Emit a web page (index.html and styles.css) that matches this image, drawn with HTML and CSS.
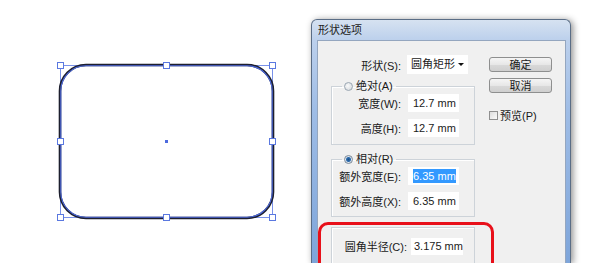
FILE: index.html
```html
<!DOCTYPE html>
<html lang="zh-CN">
<head>
    <meta charset="UTF-8">
    <title>形状选项</title>
    <link rel="stylesheet" href="styles.css">
</head>
<body>
    <div class="canvas">
        <svg width="300" height="263" viewBox="0 0 300 263">
            <rect x="60.5" y="65.5" width="212" height="152" fill="none" stroke="#7a92ea" stroke-width="1"/>
            <rect x="60" y="65" width="213" height="153" rx="26" fill="none" stroke="#1d1f2e" stroke-width="2.6"/>
            <rect x="60.8" y="65.8" width="211.4" height="151.4" rx="25" fill="none" stroke="#4d6ade" stroke-width="1.1"/>
            <g fill="#fff" stroke="#5a78e0" stroke-width="1">
                <rect x="57.5" y="62.5" width="6" height="6"/>
                <rect x="163.5" y="62.5" width="6" height="6"/>
                <rect x="269.5" y="62.5" width="6" height="6"/>
                <rect x="57.5" y="138.5" width="6" height="6"/>
                <rect x="269.5" y="138.5" width="6" height="6"/>
                <rect x="57.5" y="214.5" width="6" height="6"/>
                <rect x="163.5" y="214.5" width="6" height="6"/>
                <rect x="269.5" y="214.5" width="6" height="6"/>
            </g>
            <rect x="165" y="140" width="3" height="3" fill="#4d6ade"/>
        </svg>
    </div>

    <div class="dialog">
        <div class="titlebar">形状选项</div>
        <div class="client">
            <div class="form">
                <div class="row shape-row">
                    <span class="lbl">形状(S):</span>
                    <div class="select">圆角矩形<span class="caret"></span></div>
                </div>

                <fieldset class="group">
                    <legend><span class="radio"></span>绝对(A)</legend>
                    <div class="row">
                        <span class="lbl">宽度(W):</span>
                        <div class="field">12.7 mm</div>
                    </div>
                    <div class="row">
                        <span class="lbl">高度(H):</span>
                        <div class="field">12.7 mm</div>
                    </div>
                </fieldset>

                <fieldset class="group group-rel">
                    <legend><span class="radio checked"></span>相对(R)</legend>
                    <div class="row">
                        <span class="lbl">额外宽度(E):</span>
                        <div class="field"><span class="sel">6.35 mm</span></div>
                    </div>
                    <div class="row">
                        <span class="lbl">额外高度(X):</span>
                        <div class="field">6.35 mm</div>
                    </div>
                </fieldset>

                <fieldset class="group group-radius">
                    <div class="row">
                        <span class="lbl">圆角半径(C):</span>
                        <div class="field">3.175 mm</div>
                    </div>
                </fieldset>
            </div>

            <div class="side">
                <div class="btn">确定</div>
                <div class="btn">取消</div>
                <div class="check"><span class="box"></span>预览(P)</div>
            </div>

            <div class="highlight"></div>
        </div>
    </div>
</body>
</html>
```

FILE: styles.css
```css
body {
    margin: 0;
    padding: 0;
    height: 263px;
    overflow: hidden;
    background: #fff;
    display: flex;
    align-items: flex-start;
    font-family: "Liberation Sans", "Noto Sans CJK SC", sans-serif;
    font-size: 11px;
    color: #1a1a1a;
}

.canvas {
    width: 300px;
    height: 263px;
    flex: none;
}

.canvas svg {
    display: block;
}

/* window frame, cut off by the bottom of the shot */
.dialog {
    margin: 19px 0 0 11px;
    width: 260px;
    height: 244px;
    box-sizing: border-box;
    padding: 0 4px 0 5px;
    border: 1px solid #5a6d86;
    border-bottom: none;
    border-radius: 6px 6px 0 0;
    background: linear-gradient(180deg, #d6e2f1 0, #bcd0ec 20px, #9fbde6 90px, #7ea5da 100%);
    box-shadow: 2px 1px 7px rgba(0, 0, 0, 0.45);
    flex: none;
    display: flex;
    flex-direction: column;
}

.titlebar {
    height: 20px;
    line-height: 20px;
    padding-left: 1px;
    color: #222;
    flex: none;
}

.client {
    position: relative;
    flex: 1;
    overflow: hidden;
    display: flex;
    align-items: flex-start;
    background: #f0f0f0;
    border: 1px solid #94a6bf;
    border-bottom: none;
    padding-top: 14px;
}

.form {
    width: 158px;
    flex: none;
}

.row {
    display: flex;
    align-items: center;
    height: 18px;
}

.row + .row {
    margin-top: 7px;
}

.lbl {
    width: 69px;
    text-align: right;
    white-space: nowrap;
}

.shape-row {
    height: 19px;
    padding-left: 14px;
}

.select {
    position: relative;
    margin-left: 6px;
    width: 61px;
    height: 19px;
    line-height: 19px;
    padding-left: 4px;
    box-sizing: border-box;
    background: #fff;
}

.caret {
    position: absolute;
    right: 4px;
    top: 8px;
    border-left: 3px solid transparent;
    border-right: 3px solid transparent;
    border-top: 3px solid #111;
}

.field {
    margin-left: 7px;
    width: 51px;
    height: 18px;
    line-height: 18px;
    padding-left: 5px;
    box-sizing: border-box;
    background: #fff;
    white-space: nowrap;
}

.sel {
    background: #3399ff;
    color: #fff;
    padding: 1px 0;
}

/* group boxes */
.group {
    margin: 5px 0 0 13px;
    width: 144px;
    box-sizing: border-box;
    padding: 1px 0 7px 0;
    border: 1px solid #cdd3d9;
    box-shadow: inset 1px 1px 0 #fff;
}

.group legend {
    margin-left: 10px;
    padding: 0 3px 0 2px;
    height: 14px;
    line-height: 14px;
    display: flex;
    align-items: center;
}

.group-rel {
    margin-top: 7px;
    padding-bottom: 6px;
}

.group-radius {
    margin-top: 10px;
    padding: 9px 0 20px 0;
}

.group-radius .lbl {
    width: 75px;
}

.group-radius .field {
    margin-left: 4px;
    width: 52px;
    height: 17px;
    line-height: 17px;
    padding-left: 3px;
}

.radio {
    width: 9px;
    height: 9px;
    margin-right: 3px;
    border-radius: 50%;
    box-sizing: border-box;
    border: 1px solid #9aa6b2;
    background: radial-gradient(circle at 40% 40%, #fafafa, #cfd4d9);
}

.radio.checked {
    background: radial-gradient(circle, #1b4f86 0, #2d6cae 2px, #dfe6ee 3px, #c8d0d8 100%);
    border-color: #7d8b99;
}

/* buttons column */
.side {
    margin: 2px 0 0 13px;
    width: 63px;
    flex: none;
}

.btn {
    height: 15px;
    line-height: 15px;
    text-align: center;
    border: 1px solid #8e8f8f;
    border-radius: 3px;
    box-sizing: border-box;
    background: linear-gradient(180deg, #f5f5f5 0, #e7e7e7 50%, #d9d9d9 51%, #cfcfcf 100%);
}

.btn + .btn {
    margin-top: 6px;
}

.check {
    margin-top: 17px;
    display: flex;
    align-items: center;
    height: 10px;
}

.box {
    width: 9px;
    height: 9px;
    margin-right: 2px;
    box-sizing: border-box;
    border: 1px solid #8f8f8f;
    background: linear-gradient(135deg, #dcdcdc, #fafafa);
}

/* red callout drawn over the radius group */
.highlight {
    position: absolute;
    left: 0;
    top: 181px;
    width: 176px;
    height: 70px;
    box-sizing: border-box;
    border: 3px solid #e8101a;
    border-radius: 10px;
}
```
